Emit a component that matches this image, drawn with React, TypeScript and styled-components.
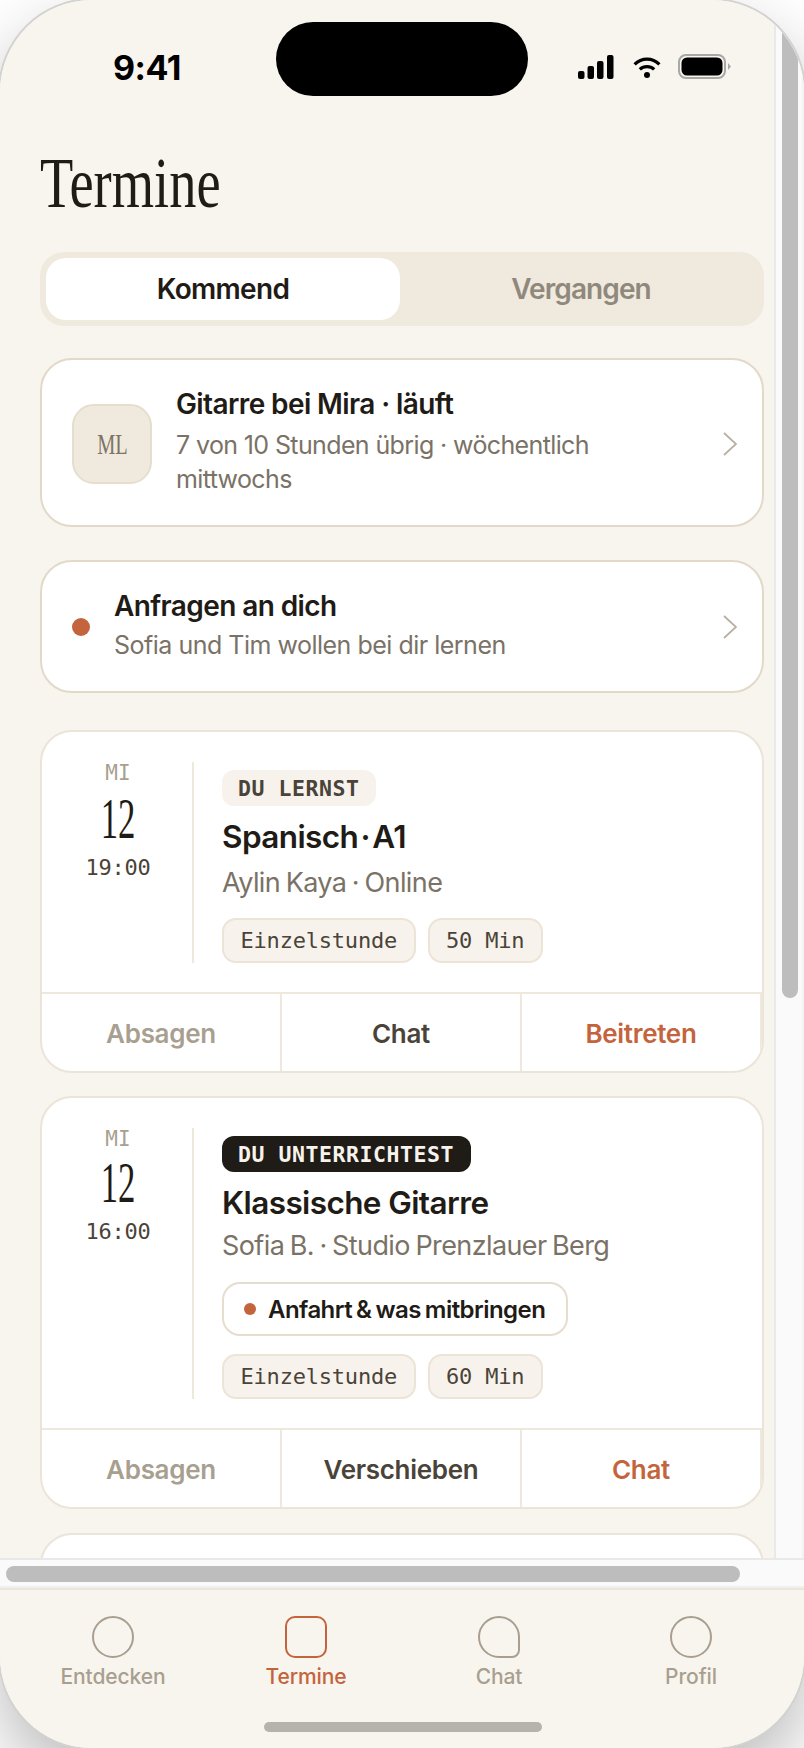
import * as React from 'react';
import styled, { createGlobalStyle } from 'styled-components';

const SANS = "Inter, 'Liberation Sans', sans-serif";
const SERIF = "'Liberation Serif', serif";
const MONO = "'DejaVu Sans Mono', monospace";

const GlobalStyle = createGlobalStyle`
  html, body {
    margin: 0;
    background: #fff;
    font-family: ${SANS};
  }
`;

const Phone = styled.div`
  width: 804px;
  height: 1748px;
  border-radius: 92px;
  overflow: hidden;
  display: flex;
  flex-direction: column;
  background: #f8f5ee;
  box-shadow: 0 0 0 2px #d2d2d0, 0 30px 70px rgba(0, 0, 0, 0.28);
`;

const ScrollArea = styled.div`
  display: flex;
  height: 1558px;
  flex: 0 0 auto;
`;

const Pane = styled.div`
  width: 774px;
  flex: 0 0 auto;
  overflow: hidden;
  background: #f8f5ee;
`;

const VerticalTrack = styled.div`
  flex: 1;
  box-sizing: border-box;
  background: #fafafa;
  border-left: 2px solid #e9e9e9;
  border-right: 2px solid #f3f3f3;
  padding-left: 6px;
`;

const VerticalThumb = styled.div`
  width: 16px;
  height: 998px;
  border-radius: 0 0 8px 8px;
  background: #bdbdbd;
`;

const HorizontalTrack = styled.div`
  height: 30px;
  box-sizing: border-box;
  background: #fafafa;
  border-top: 2px solid #e9e9e9;
  border-bottom: 2px solid #f0f0f0;
  padding: 6px 0 0 6px;
`;

const HorizontalThumb = styled.div`
  width: 734px;
  height: 16px;
  border-radius: 8px;
  background: #bdbdbd;
`;

const Inner = styled.div`
  width: 804px;
`;

const StatusBar = styled.div`
  display: grid;
  grid-template-columns: 276px 252px 276px;
  padding-top: 22px;
  height: 74px;
`;

const Time = styled.div`
  justify-self: start;
  margin: 26px 0 0 113px;
  font-size: 34px;
  line-height: 40px;
  font-weight: 700;
  letter-spacing: -0.5px;
  color: #000;
`;

const Island = styled.div`
  height: 74px;
  border-radius: 37px;
  background: #000;
`;

const StatusIcons = styled.div`
  display: flex;
  align-items: flex-end;
  margin: 32px 0 0 50px;
  height: 25px;
`;

const Content = styled.main`
  padding: 51px 40px 0;
`;

const PageTitle = styled.h1`
  margin: 0 0 33px;
  font-family: ${SERIF};
  font-weight: 400;
  font-size: 72px;
  line-height: 72px;
  color: #1f1b16;
  transform: scaleX(0.756);
  transform-origin: left center;
`;

const Tabs = styled.div`
  display: grid;
  grid-template-columns: 1fr 1fr;
  gap: 4px;
  padding: 6px;
  height: 74px;
  box-sizing: border-box;
  border-radius: 24px;
  background: #f0e9dd;
  margin-bottom: 32px;
`;

const Tab = styled.div<{ $active?: boolean }>`
  display: flex;
  align-items: center;
  justify-content: center;
  border-radius: 20px;
  font-size: 28px;
  font-weight: 600;
  letter-spacing: ${p => (p.$active ? -0.7 : -0.9)}px;
  background: ${p => (p.$active ? '#fff' : 'transparent')};
  color: ${p => (p.$active ? '#1f1b16' : '#8f887c')};
`;

const Card = styled.section<{ $gap?: number; $strong?: boolean }>`
  box-sizing: border-box;
  background: #fff;
  border: 2px solid ${p => (p.$strong ? '#e2d9c8' : '#ebe4d8')};
  border-radius: 32px;
  margin-bottom: ${p => p.$gap ?? 24}px;
  overflow: hidden;
`;

const LinkRow = styled.div<{ $tall?: boolean }>`
  display: flex;
  align-items: center;
  gap: 24px;
  box-sizing: border-box;
  height: ${p => (p.$tall ? 165 : 129)}px;
  padding: ${p => (p.$tall ? 3 : 0)}px 25px 0 30px;
`;

const Avatar = styled.div`
  flex: 0 0 80px;
  height: 80px;
  box-sizing: border-box;
  border-radius: 22px;
  background: #f0e9dd;
  border: 2px solid #e6ddce;
  display: flex;
  align-items: center;
  justify-content: center;
  overflow: hidden;
`;

const AvatarText = styled.span`
  font-family: ${SERIF};
  font-size: 30px;
  color: #7d7466;
  transform: scaleX(0.68);
`;

const RowDot = styled.span`
  flex: 0 0 18px;
  height: 18px;
  border-radius: 50%;
  background: #c4643c;
`;

const RowText = styled.div<{ $tall?: boolean }>`
  flex: 1;
  min-width: 0;
  padding-bottom: ${p => (p.$tall ? 6 : 2)}px;
`;

const RowTitle = styled.div<{ $tall?: boolean }>`
  font-size: 28px;
  line-height: 34px;
  font-weight: 600;
  letter-spacing: -0.6px;
  margin-bottom: ${p => (p.$tall ? 7 : 5)}px;
  color: #1f1b16;
`;

const RowSub = styled.div<{ $tall?: boolean }>`
  max-width: 450px;
  font-size: 25px;
  line-height: 34px;
  letter-spacing: ${p => (p.$tall ? -0.62 : -0.5)}px;
  color: #7a7266;
`;

const Chevron = styled.svg`
  flex: 0 0 14px;
  width: 14px;
  height: 24px;
  fill: none;
  stroke: #b8b0a0;
  stroke-width: 1.8;
`;

const LessonBody = styled.div`
  display: flex;
  padding: 30px 30px 29px;
`;

const DateColumn = styled.div`
  flex: 0 0 92px;
  display: flex;
  flex-direction: column;
  align-items: center;
  margin: -1px 28px 0 0;
`;

const Weekday = styled.div`
  font-family: ${MONO};
  font-size: 21px;
  line-height: 24px;
  color: #a89f90;
`;

const DayNumber = styled.div<{ $compact?: boolean }>`
  font-family: ${SERIF};
  font-size: 56px;
  line-height: 56px;
  margin-top: ${p => (p.$compact ? 4 : 6)}px;
  color: #1f1b16;
  transform: scaleX(0.62);
`;

const ClockTime = styled.div`
  font-family: ${MONO};
  font-size: 22px;
  line-height: 26px;
  letter-spacing: -0.2px;
  margin-top: 8px;
  color: #4a4339;
`;

const LessonInfo = styled.div`
  flex: 1;
  border-left: 2px solid #efe8dc;
  padding: 8px 0 0 28px;
  display: flex;
  flex-direction: column;
  align-items: flex-start;
`;

const RoleTag = styled.span<{ $dark?: boolean }>`
  height: 36px;
  display: inline-flex;
  align-items: center;
  padding: 0 17px 0 16px;
  border-radius: 12px;
  font-family: ${MONO};
  font-size: 21.5px;
  font-weight: 700;
  letter-spacing: 0.55px;
  background: ${p => (p.$dark ? '#1f1b16' : '#f7f3ec')};
  color: ${p => (p.$dark ? '#f7f3ec' : '#4a4339')};
`;

const LessonTitle = styled.div<{ $dotted?: boolean }>`
  margin-top: 12px;
  font-size: 31.5px;
  line-height: 38px;
  font-weight: 600;
  letter-spacing: -0.6px;
  word-spacing: ${p => (p.$dotted ? -5 : 0)}px;
  color: #1f1b16;
`;

const LessonSub = styled.div<{ $compact?: boolean }>`
  margin-top: ${p => (p.$compact ? 7 : 10)}px;
  font-size: 27px;
  line-height: 34px;
  letter-spacing: -0.6px;
  word-spacing: -1.5px;
  color: #7a7266;
`;

const NoticePill = styled.div`
  margin-top: 19px;
  height: 54px;
  box-sizing: border-box;
  display: inline-flex;
  align-items: center;
  gap: 12px;
  padding: 0 21px 0 20px;
  border: 2px solid #e6ddce;
  border-radius: 18px;
  font-size: 24px;
  font-weight: 600;
  letter-spacing: -0.55px;
  word-spacing: -1.5px;
  color: #1f1b16;
`;

const NoticeDot = styled.span`
  width: 12px;
  height: 12px;
  border-radius: 50%;
  background: #c4643c;
`;

const Chips = styled.div`
  display: flex;
  gap: 12px;
  margin-top: 18px;
`;

const Chip = styled.span`
  height: 45px;
  box-sizing: border-box;
  display: inline-flex;
  align-items: center;
  padding: 0 16.5px;
  border-radius: 14px;
  border: 2px solid #ece4d6;
  background: #f7f3ec;
  font-family: ${MONO};
  font-size: 22px;
  letter-spacing: -0.2px;
  color: #4a4339;
`;

const Actions = styled.div`
  display: grid;
  grid-template-columns: repeat(3, 240px);
  border-top: 2px solid #efe8dc;
`;

const ActionButton = styled.div<{ $tone: 'muted' | 'plain' | 'accent' }>`
  height: 77px;
  box-sizing: border-box;
  padding-top: 1px;
  display: flex;
  align-items: center;
  justify-content: center;
  border-right: 2px solid #efe8dc;
  font-size: 26px;
  font-weight: 600;
  letter-spacing: -0.3px;
  color: ${p => ({ muted: '#a89f90', plain: '#4a4339', accent: '#c4643c' })[p.$tone]};
`;

const EmptyCard = styled(Card)`
  height: 343px;
`;

const TabBar = styled.nav`
  flex: 1;
  border-top: 2px solid #ece5d9;
  background: #f8f5ee;
  display: flex;
  flex-direction: column;
  align-items: center;
`;

const TabItems = styled.div`
  display: grid;
  grid-template-columns: 192px 194px 192px 192px;
  padding-top: 26px;
`;

const TabItem = styled.div<{ $active?: boolean }>`
  display: flex;
  flex-direction: column;
  align-items: center;
  gap: 6px;
  font-size: 21px;
  line-height: 26px;
  font-weight: 500;
  letter-spacing: -0.1px;
  color: ${p => (p.$active ? '#c4643c' : '#a89f90')};
`;

const TabIcon = styled.span<{ $shape: string }>`
  width: 42px;
  height: 42px;
  box-sizing: border-box;
  border: 2px solid currentColor;
  border-radius: ${p => p.$shape};
`;

const HomeBar = styled.div`
  width: 278px;
  height: 10px;
  border-radius: 5px;
  background: #b6b3ac;
  margin: 32px 0 0 2px;
`;

const Signal = () => (
  <svg width="36" height="24" viewBox="0 0 36 24" style={{ marginRight: 19 }}>
    <rect x="0" y="16" width="6.5" height="8" rx="2" />
    <rect x="9.5" y="11" width="6.5" height="13" rx="2" />
    <rect x="19" y="6" width="6.5" height="18" rx="2" />
    <rect x="29" y="0" width="6.5" height="24" rx="2" />
  </svg>
);

const Wifi = () => (
  <svg width="28" height="21" viewBox="0 0 28 21" fill="none" stroke="#000" strokeWidth="3.2" style={{ marginRight: 17, marginBottom: 1 }}>
    <path d="M1.6 7.4C8.6 0.4 19.4 0.4 26.4 7.4" />
    <path d="M6.8 12.4C10.8 8.6 17.2 8.6 21.2 12.4" />
    <circle cx="14" cy="18" r="3" fill="#000" stroke="none" />
  </svg>
);

const Battery = () => (
  <svg width="53" height="25" viewBox="0 0 53 25">
    <rect x="1" y="1" width="46" height="23" rx="7" fill="none" stroke="#a8a8a4" strokeWidth="2" />
    <rect x="3.5" y="3.5" width="41" height="18" rx="5.5" fill="#000" />
    <path d="M50 9 L53 12.5 L50 16Z" fill="#a8a8a4" />
  </svg>
);

const RowChevron = () => (
  <Chevron viewBox="0 0 14 24">
    <path d="M1 1L13 12L1 23" />
  </Chevron>
);

interface Lesson {
  time: string;
  role: string;
  teaching?: boolean;
  title: string;
  sub: string;
  notice?: string;
  length: string;
  actions: [string, string, string];
  gap: number;
}

const LESSONS: Lesson[] = [
  {
    time: '19:00',
    role: 'DU LERNST',
    title: 'Spanisch · A1',
    sub: 'Aylin Kaya · Online',
    length: '50 Min',
    actions: ['Absagen', 'Chat', 'Beitreten'],
    gap: 23,
  },
  {
    time: '16:00',
    role: 'DU UNTERRICHTEST',
    teaching: true,
    title: 'Klassische Gitarre',
    sub: 'Sofia B. · Studio Prenzlauer Berg',
    notice: 'Anfahrt & was mitbringen',
    length: '60 Min',
    actions: ['Absagen', 'Verschieben', 'Chat'],
    gap: 24,
  },
];

const NAV = [
  { label: 'Entdecken', shape: '50%' },
  { label: 'Termine', shape: '10px', active: true },
  { label: 'Chat', shape: '21px 21px 8px 21px' },
  { label: 'Profil', shape: '50%' },
];

export default function App() {
  return (
    <Phone>
      <GlobalStyle />
      <ScrollArea>
        <Pane>
          <Inner>
            <StatusBar>
              <Time>9:41</Time>
              <Island />
              <StatusIcons>
                <Signal />
                <Wifi />
                <Battery />
              </StatusIcons>
            </StatusBar>
            <Content>
              <PageTitle>Termine</PageTitle>
              <Tabs>
                <Tab $active>Kommend</Tab>
                <Tab>Vergangen</Tab>
              </Tabs>
              <Card $gap={33} $strong>
                <LinkRow $tall>
                  <Avatar><AvatarText>ML</AvatarText></Avatar>
                  <RowText $tall>
                    <RowTitle $tall>Gitarre bei Mira · läuft</RowTitle>
                    <RowSub $tall>7 von 10 Stunden übrig · wöchentlich mittwochs</RowSub>
                  </RowText>
                  <RowChevron />
                </LinkRow>
              </Card>
              <Card $gap={37} $strong>
                <LinkRow>
                  <RowDot />
                  <RowText>
                    <RowTitle>Anfragen an dich</RowTitle>
                    <RowSub>Sofia und Tim wollen bei dir lernen</RowSub>
                  </RowText>
                  <RowChevron />
                </LinkRow>
              </Card>
              {LESSONS.map(lesson => (
                <Card key={lesson.title} $gap={lesson.gap}>
                  <LessonBody>
                    <DateColumn>
                      <Weekday>MI</Weekday>
                      <DayNumber $compact={!!lesson.notice}>12</DayNumber>
                      <ClockTime>{lesson.time}</ClockTime>
                    </DateColumn>
                    <LessonInfo>
                      <RoleTag $dark={lesson.teaching}>{lesson.role}</RoleTag>
                      <LessonTitle $dotted={lesson.title.includes('·')}>{lesson.title}</LessonTitle>
                      <LessonSub $compact={!!lesson.notice}>{lesson.sub}</LessonSub>
                      {lesson.notice && (
                        <NoticePill>
                          <NoticeDot />
                          {lesson.notice}
                        </NoticePill>
                      )}
                      <Chips>
                        <Chip>Einzelstunde</Chip>
                        <Chip>{lesson.length}</Chip>
                      </Chips>
                    </LessonInfo>
                  </LessonBody>
                  <Actions>
                    <ActionButton $tone="muted">{lesson.actions[0]}</ActionButton>
                    <ActionButton $tone="plain">{lesson.actions[1]}</ActionButton>
                    <ActionButton $tone="accent">{lesson.actions[2]}</ActionButton>
                  </Actions>
                </Card>
              ))}
              <EmptyCard />
            </Content>
          </Inner>
        </Pane>
        <VerticalTrack>
          <VerticalThumb />
        </VerticalTrack>
      </ScrollArea>
      <HorizontalTrack>
        <HorizontalThumb />
      </HorizontalTrack>
      <TabBar>
        <TabItems>
          {NAV.map(item => (
            <TabItem key={item.label} $active={item.active}>
              <TabIcon $shape={item.shape} />
              {item.label}
            </TabItem>
          ))}
        </TabItems>
        <HomeBar />
      </TabBar>
    </Phone>
  );
}
